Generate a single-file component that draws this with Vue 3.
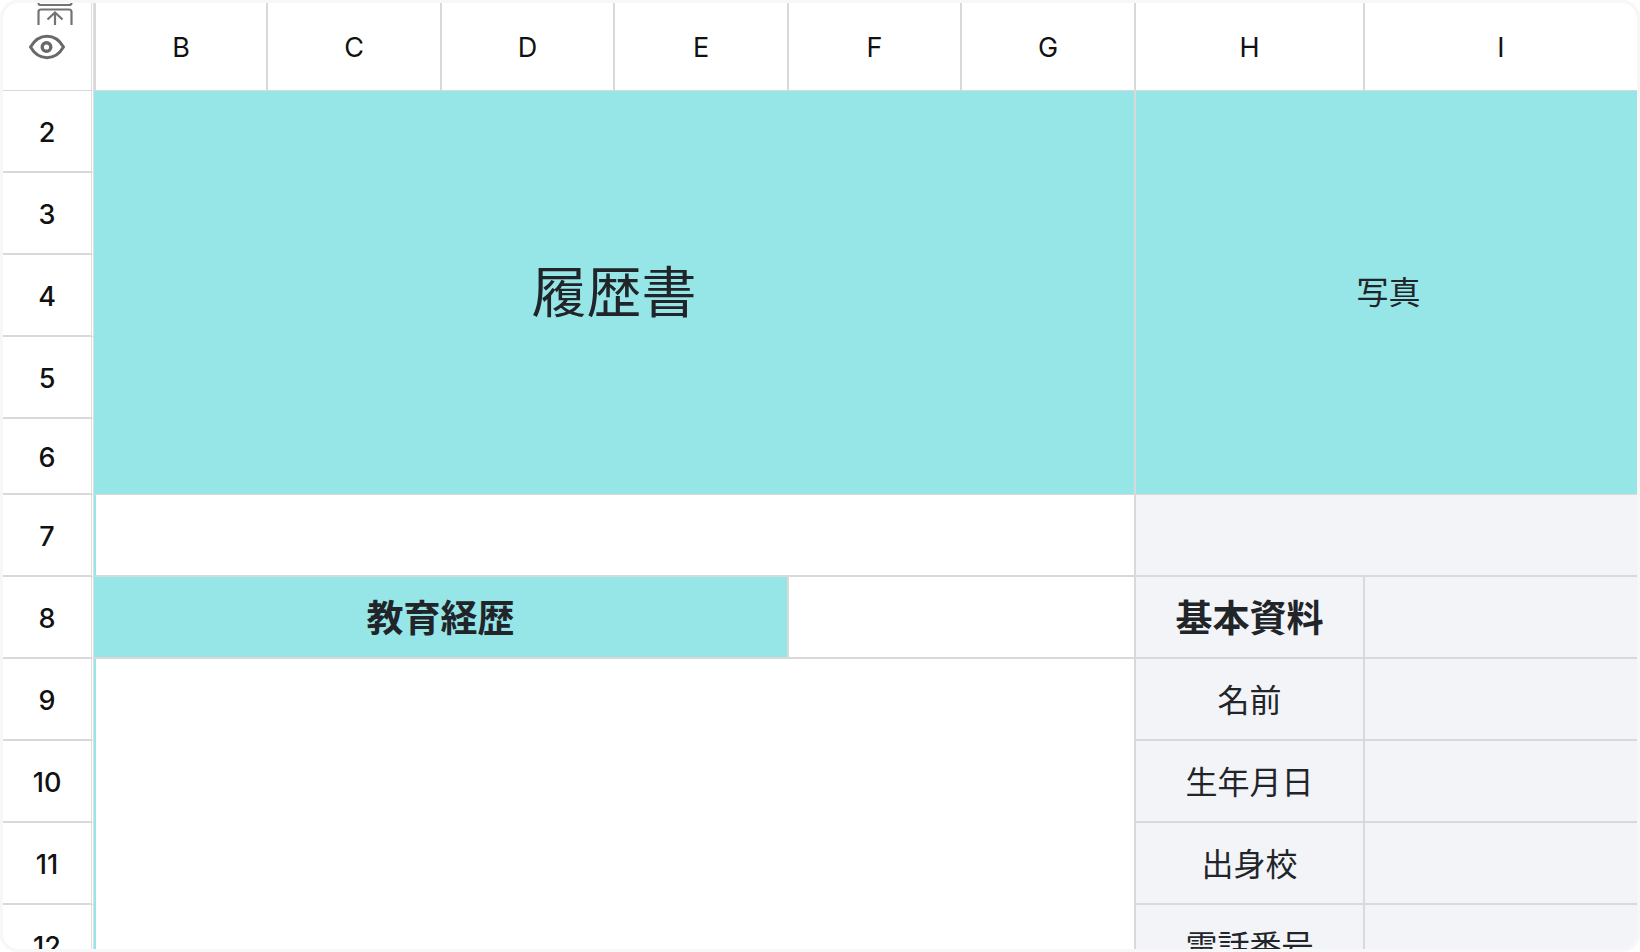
<script setup>
const columns = [
  { name: 'B', size: 'wide' },
  { name: 'C', size: 'wide' },
  { name: 'D', size: 'mid' },
  { name: 'E', size: 'wide' },
  { name: 'F', size: 'mid' },
  { name: 'G', size: 'wide' },
  { name: 'H', size: 'label' },
  { name: 'I', size: 'rest' },
]

const details = [
  { row: 10, label: '生年月日' },
  { row: 11, label: '出身校' },
  { row: 12, label: '電話番号' },
]
</script>

<template>
  <main class="frame" lang="ja">
    <table class="sheet">
      <colgroup>
        <col class="gutter" />
        <col v-for="c in columns" :key="c.name" :class="c.size" />
      </colgroup>
      <thead>
        <tr class="head">
          <th class="corner">
            <div class="tools">
              <button type="button" class="tool insert" aria-label="Insert above">
                <svg width="36" height="22" viewBox="0 0 36 22" fill="none" stroke="#737373" stroke-width="2.200">
                  <path d="M1.500 0Q1.500 2 4 2H32Q34.500 2 34.500 0" />
                  <path d="M1.500 22V9Q1.500 6.500 4 6.500H32Q34.500 6.500 34.500 9V22" />
                  <path d="M18 22V10M10.500 16.500L18 9.500L25.500 16.500" />
                </svg>
              </button>
              <button type="button" class="tool eye" aria-label="Show or hide">
                <svg width="36" height="26" viewBox="0 0 36 26" fill="none" stroke="#696969" stroke-width="3">
                  <path stroke-linejoin="round" d="M1.500 13C5 7 11 2.300 18 2.300S31 7 34.500 13C31 19 25 23.700 18 23.700S5 19 1.500 13Z" />
                  <circle cx="17.500" cy="13" r="4.300" stroke-width="3.400" />
                </svg>
              </button>
            </div>
          </th>
          <th v-for="c in columns" :key="c.name" scope="col" class="letter" :class="{ first: c.name === 'B', last: c.name === 'I' }">{{ c.name }}</th>
        </tr>
      </thead>
      <tbody>
        <tr>
          <th scope="row" class="num">2</th>
          <td class="teal title thin" colspan="6" rowspan="5">履歴書</td>
          <td class="teal photo thin last" colspan="2" rowspan="5">写真</td>
        </tr>
        <tr v-for="n in [3, 4, 5]" :key="n">
          <th scope="row" class="num">{{ n }}</th>
        </tr>
        <tr class="short">
          <th scope="row" class="num">6</th>
        </tr>
        <tr>
          <th scope="row" class="num">7</th>
          <td class="edge" colspan="6"></td>
          <td class="gray last" colspan="2"></td>
        </tr>
        <tr>
          <th scope="row" class="num">8</th>
          <td class="teal section" colspan="4">教育経歴</td>
          <td colspan="2"></td>
          <td class="gray section">基本資料</td>
          <td class="gray last"></td>
        </tr>
        <tr>
          <th scope="row" class="num">9</th>
          <td class="edge" colspan="6" rowspan="4"></td>
          <td class="gray">名前</td>
          <td class="gray last"></td>
        </tr>
        <tr v-for="d in details" :key="d.row">
          <th scope="row" class="num">{{ d.row }}</th>
          <td class="gray">{{ d.label }}</td>
          <td class="gray last"></td>
        </tr>
      </tbody>
    </table>
  </main>
</template>

<style>
body {
  margin: 0;
  background: #fff;
}
</style>

<style scoped>
.frame {
  box-sizing: border-box;
  height: 100vh;
  overflow: hidden;
  border: 3px solid #f7f7f7;
  border-radius: 18px;
  background: #fff;
}

.sheet {
  width: 100%;
  table-layout: fixed;
  border-collapse: separate;
  border-spacing: 0;
  color: #212529;
  font-family: Inter, "Noto Sans CJK JP", sans-serif;
}

.gutter { width: 91px; }
.wide { width: 174px; }
.mid { width: 173px; }
.label { width: 229px; }

tr { height: 82px; }
.head { height: 88px; }
.short { height: 76px; }

th,
td {
  box-sizing: border-box;
  padding: 0;
  border: 0 solid #d9d9d9;
  border-right-width: 2px;
  border-bottom-width: 2px;
  text-align: center;
  vertical-align: middle;
  line-height: 40px;
}

td {
  padding-bottom: 2px;
  font-family: "Noto Sans CJK JP", sans-serif;
  font-size: 32px;
}

.letter {
  padding-top: 2px;
  border-bottom-width: 1px;
  color: #111;
  font-size: 27px;
  font-weight: 400;
}

.first { border-left-width: 2px; }

.corner,
.num {
  border-right: 3px double #dedede;
}

.num {
  padding-top: 4px;
  color: #111;
  font-size: 27px;
  font-weight: 500;
}

.corner {
  border-bottom-width: 1px;
  vertical-align: top;
}

.last { border-right-width: 0; }
.thin { border-bottom-width: 1px; }
.teal { background: #96e6e8; }
.gray { background: #f3f4f7; }
.edge { border-left: 2px solid #96e6e8; }

.title {
  padding-bottom: 10px;
  font-size: 55px;
  line-height: 64px;
}

.photo { padding: 0 0 6px 4px; }

.section {
  font-size: 37px;
  font-weight: 700;
}

.tools {
  display: flex;
  flex-direction: column;
  align-items: center;
  gap: 9px;
}

.tool {
  display: block;
  padding: 0;
  border: 0;
  background: none;
  cursor: pointer;
}

.tool svg { display: block; }
.insert { margin-left: 15px; }
</style>
